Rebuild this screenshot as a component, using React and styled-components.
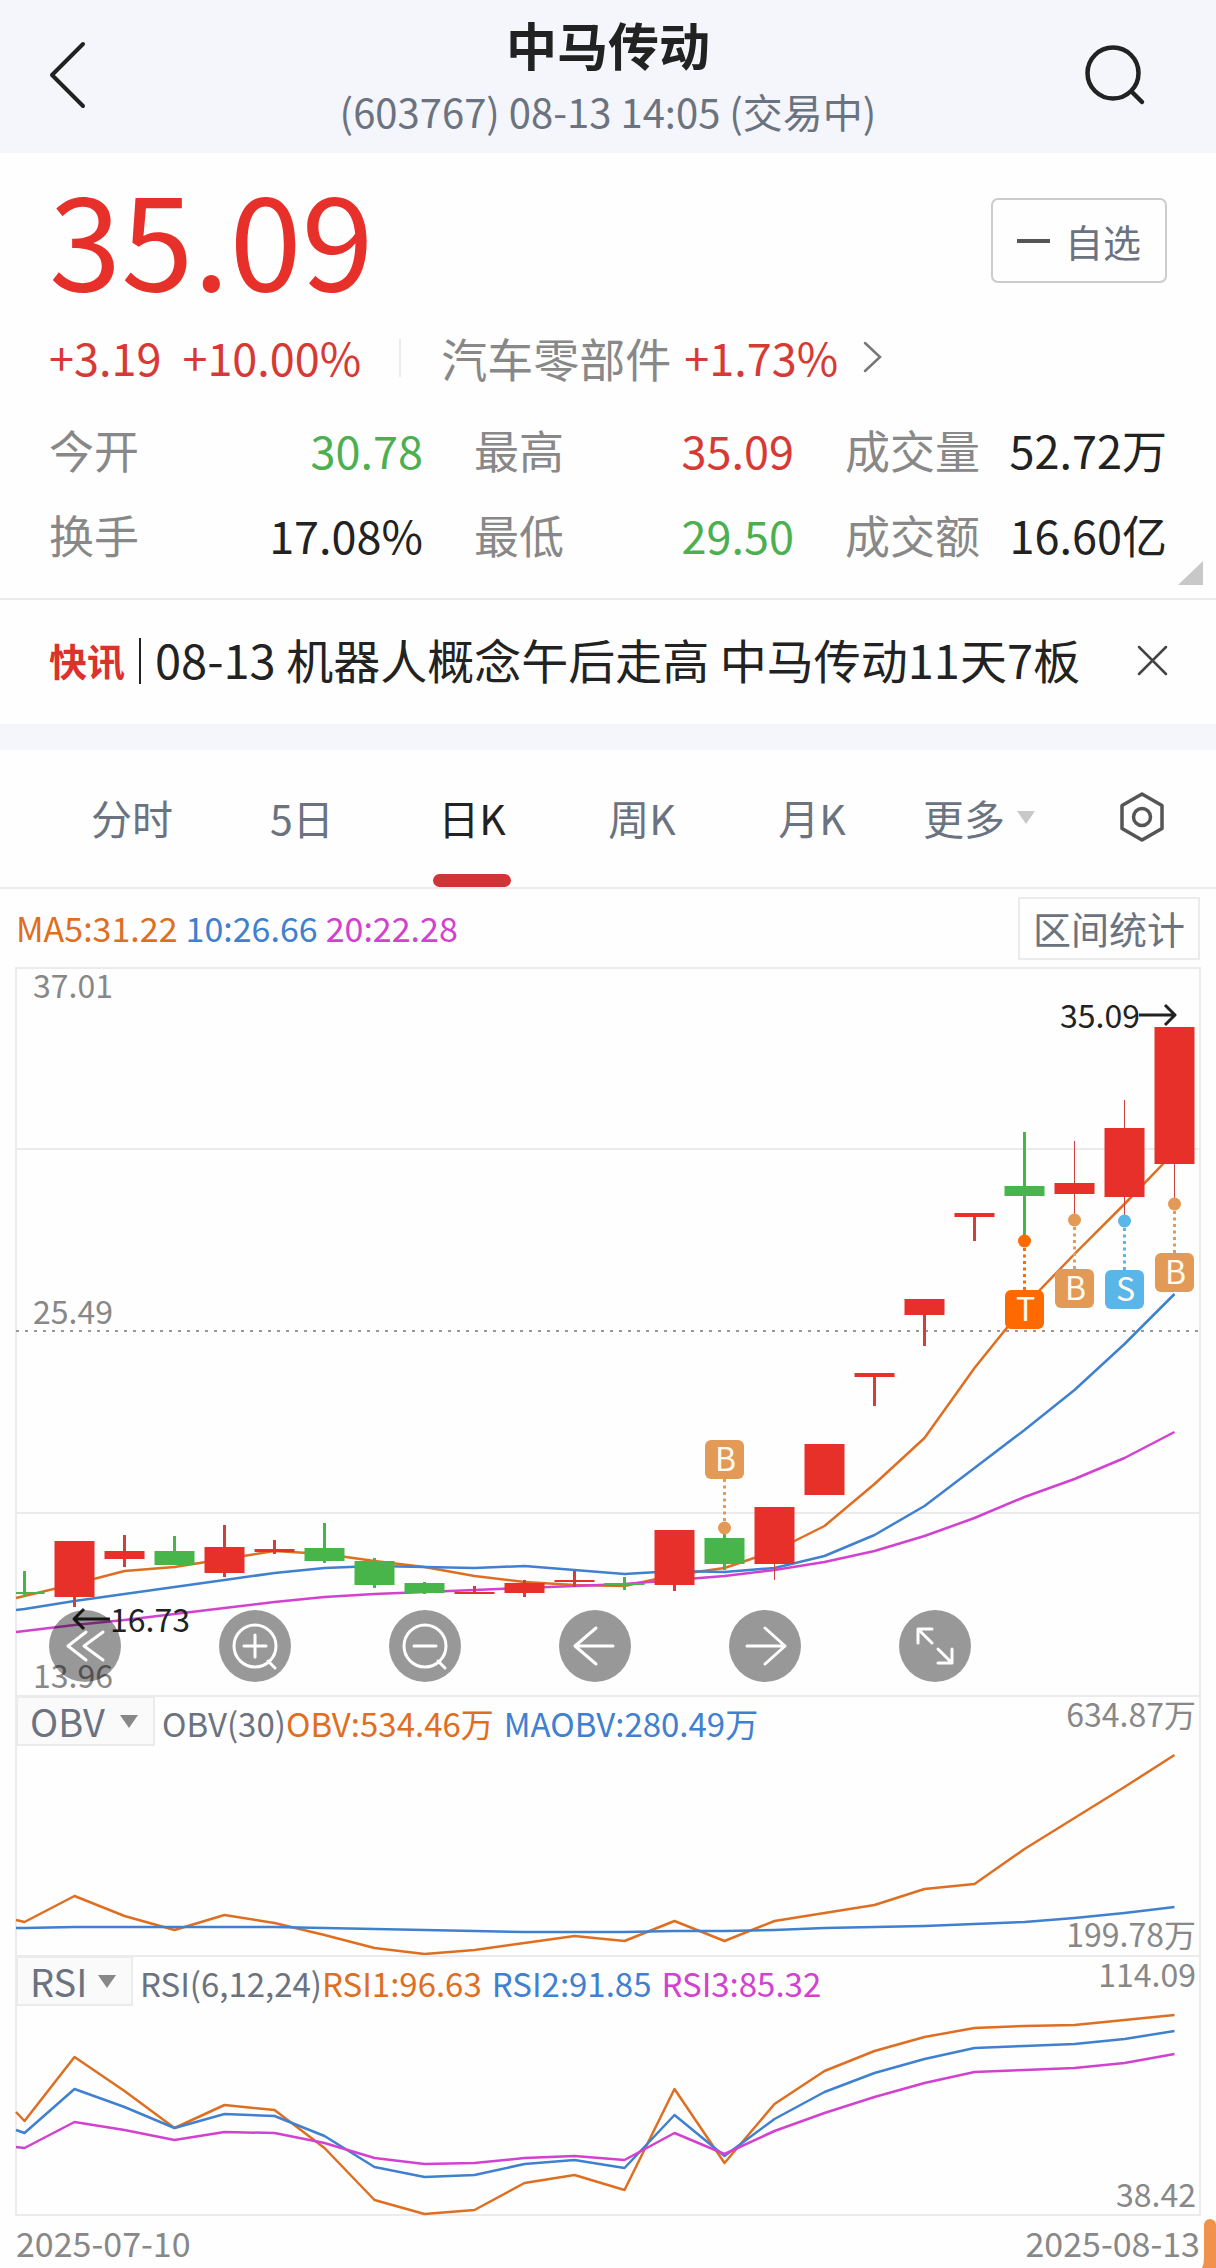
import React from "react";
import styled, { createGlobalStyle, css } from "styled-components";

const color = {
  ink: "#222222",
  muted: "#888888",
  slate: "#6b7280",
  rise: "#d63a35",
  riseFill: "#e7302a",
  fall: "#4caf50",
  fallFill: "#47b549",
  orange: "#de6f22",
  blue: "#3f80cf",
  magenta: "#d241cf",
  line: "#ebebee",
  band: "#f4f6fb",
};

const GlobalStyle = createGlobalStyle`
  *, *::before, *::after { box-sizing: border-box; }
  body {
    margin: 0;
    background: #fefefe;
    color: ${color.ink};
    font-family: "Noto Sans CJK SC", "Noto Sans", sans-serif;
  }
  button, select {
    font: inherit;
    color: inherit;
    background: none;
    border: 0;
    padding: 0;
    margin: 0;
    cursor: pointer;
  }
  a { color: inherit; text-decoration: none; }
  h1, p, dl, dd { margin: 0; }
  svg { display: block; }
`;

const Page = styled.main`
  position: relative;
  overflow: hidden;
`;

/* ---------- header ---------- */

const Header = styled.header`
  display: grid;
  grid-template-columns: 1fr auto 1fr;
  align-items: center;
  padding: 14px 48px 17px;
  background: ${color.band};
`;

const HeaderTitles = styled.div`
  display: flex;
  flex-direction: column;
  align-items: center;
  gap: 12px;
`;

const Title = styled.h1`
  font-size: 51px;
  line-height: 60px;
  font-weight: 700;
`;

const Subtitle = styled.p`
  font-size: 40px;
  line-height: 50px;
  color: ${color.slate};
`;

const IconButton = styled.button`
  display: flex;
  align-items: center;
  justify-content: center;
  flex: none;
  justify-self: ${(p) => (p.$side === "end" ? "end" : "start")};
`;

/* ---------- quote ---------- */

const Quote = styled.section`
  position: relative;
  padding: 20px 49px 33px;
  border-bottom: 2px solid ${color.line};
`;

const PriceRow = styled.div`
  display: flex;
  justify-content: space-between;
  align-items: flex-start;
`;

const Price = styled.p`
  font-size: 130px;
  line-height: 122px;
  height: 144px;
  color: ${color.riseFill};
`;

const WatchButton = styled.button`
  display: flex;
  align-items: center;
  gap: 15px;
  margin-top: 25px;
  padding: 0 24px;
  height: 85px;
  border: 2px solid #cccccc;
  border-radius: 7px;
  font-size: 38px;
  line-height: 48px;
  color: ${color.slate};
`;

const Dash = styled.span`
  width: 33px;
  height: 4px;
  background: #555555;
`;

const ChangeRow = styled.div`
  display: flex;
  align-items: center;
  font-size: 45px;
  line-height: 60px;
  margin-top: 10px;
  color: ${color.rise};
`;

const ChangeValues = styled.div`
  display: flex;
  gap: 21px;
  padding-right: 38px;
`;

const Sector = styled.a`
  display: flex;
  align-items: center;
  gap: 13px;
  padding-left: 42px;
  position: relative;

  &::before {
    content: "";
    position: absolute;
    left: 0;
    top: 12px;
    width: 2px;
    height: 38px;
    background: ${color.line};
  }
  svg { margin-left: 12px; }
`;

const SectorName = styled.span`
  font-size: 46px;
  color: ${color.muted};
`;

const Stats = styled.dl`
  display: grid;
  grid-template-columns: 374fr 320fr 322fr;
  column-gap: 51px;
  row-gap: 25px;
  margin-top: 33px;
  font-size: 45px;
  line-height: 60px;
`;

const Stat = styled.div`
  display: flex;
  justify-content: space-between;
  white-space: nowrap;
`;

const StatLabel = styled.dt`
  color: ${color.muted};
`;

const StatValue = styled.dd`
  color: ${(p) => (p.$trend === "up" ? color.rise : p.$trend === "down" ? color.fall : color.ink)};
`;

const ExpandCorner = styled.button`
  position: absolute;
  right: 13px;
  bottom: 13px;
`;

/* ---------- news ---------- */

const News = styled.section`
  display: flex;
  align-items: center;
  height: 124px;
  padding: 0 48px 3px 49px;
  font-size: 47px;
  line-height: 60px;
  white-space: nowrap;
`;

const NewsTag = styled.strong`
  padding-bottom: 2px;
  font-size: 38px;
  font-weight: 700;
  color: #dd312c;
`;

const NewsLink = styled.a`
  flex: 1;
  display: flex;
  align-items: center;
  margin-left: 14px;
  padding-bottom: 4px;

  &::before {
    content: "";
    width: 2px;
    height: 46px;
    margin-right: 14px;
    margin-top: 4px;
    background: ${color.ink};
  }
`;

const Band = styled.div`
  height: 26px;
  background: ${color.band};
`;

/* ---------- tabs ---------- */

const Tabs = styled.nav`
  display: flex;
  height: 139px;
  padding-left: 47px;
  border-bottom: 2px solid ${color.line};
`;

const Tab = styled.button`
  position: relative;
  flex: 170 1 0;
  display: flex;
  align-items: center;
  justify-content: center;
  gap: 12px;
  padding-bottom: 3px;
  font-size: 41px;
  line-height: 60px;
  white-space: nowrap;
  color: ${(p) => (p.$active ? color.ink : color.slate)};

  ${(p) =>
    p.$active &&
    css`
      &::after {
        content: "";
        position: absolute;
        bottom: 0;
        width: 78px;
        height: 13px;
        border-radius: 7px;
        background: #d13437;
      }
    `}
`;

const MenuTab = styled(Tab)`
  svg { margin-right: 6px; }
`;

const SettingsTab = styled(Tab)`
  flex-grow: 149;
`;

/* ---------- charts ---------- */

const Legend = styled.div`
  display: flex;
  align-items: center;
  gap: ${(p) => (p.$inPanel ? 10 : 8)}px;
  font-size: ${(p) => (p.$inPanel ? 33 : 34)}px;
  line-height: ${(p) => (p.$inPanel ? 54 : 46)}px;
  white-space: nowrap;
`;

const LegendItem = styled.span`
  color: ${(p) => p.$tone};
`;

const ChartBar = styled.div`
  display: flex;
  align-items: center;
  justify-content: space-between;
  height: 78px;
  padding: 0 16px;
`;

const RangeButton = styled.button`
  height: 63px;
  padding: 0 13px;
  border: 2px solid ${color.line};
  font-size: 38px;
  line-height: 56px;
  color: ${color.slate};
`;

const Panel = styled.section`
  display: grid;

  & > * { grid-area: 1 / 1; }
`;

const Plot = styled.svg`
  width: 100%;
  height: auto;
  overflow: visible;

  text {
    font-size: 32px;
    fill: ${color.muted};
  }
`;

const Controls = styled.div`
  align-self: end;
  display: flex;
  padding: 0 196px 13px 0;
`;

const ControlSlot = styled.div`
  flex: 1;
  display: flex;
  justify-content: center;
`;

const ControlButton = styled.button`
  display: flex;
  width: 72px;
  height: 72px;
  border-radius: 50%;
  background: rgba(0, 0, 0, 0.4);

  svg {
    fill: none;
    stroke: #ffffff;
    stroke-width: 3;
    stroke-linecap: round;
    stroke-linejoin: round;
  }
`;

const PanelHead = styled.div`
  align-self: start;
  display: flex;
  align-items: flex-start;
  gap: 7px;
  padding: 1px 16px 0;
`;

const Picker = styled.label`
  display: grid;
  align-items: center;
  width: ${(p) => p.$width}px;
  border: 2px solid ${color.line};
  background: #fafafb;

  & > * { grid-area: 1 / 1; }
  svg { justify-self: end; margin-right: 15px; pointer-events: none; }
`;

const PickerSelect = styled.select`
  appearance: none;
  width: 100%;
  height: 46px;
  padding: 0 36px 0 12px;
  font-size: 38px;
  line-height: 46px;
  color: ${color.slate};
`;

const Dates = styled.div`
  display: flex;
  justify-content: space-between;
  padding: 2px 16px 0;
  font-size: 34px;
  line-height: 50px;
  color: ${color.muted};
`;

const FloatingEdge = styled.svg`
  position: absolute;
  right: 0;
  bottom: 0;
`;

/* ---------- data ---------- */

const STEP = 50;
const FIRST_X = 24.5;
const BODY = 40;
const xAt = (i) => FIRST_X + STEP * i;

/* Each candle: trend, high, body top, body bottom, low, wick width. */
const candles = [
  ["down", 1571, 1592, 1594, 1597, 3],
  ["up", 1541, 1541, 1597, 1607, 3],
  ["up", 1535, 1551, 1559, 1567, 3],
  ["down", 1536, 1551, 1565, 1565, 3],
  ["up", 1525, 1547, 1573, 1577, 3],
  ["up", 1540, 1549, 1552, 1554, 3],
  ["down", 1523, 1548, 1561, 1563, 3],
  ["down", 1558, 1561, 1585, 1588, 3],
  ["down", 1582, 1583, 1593, 1594, 3],
  ["up", 1586, 1592, 1594, 1594, 3],
  ["up", 1580, 1583, 1593, 1597, 3],
  ["up", 1571, 1580, 1582, 1587, 3],
  ["down", 1577, 1583, 1585, 1590, 3],
  ["up", 1530, 1530, 1585, 1591, 3],
  ["down", 1528, 1538, 1564, 1570, 3],
  ["up", 1507, 1507, 1564, 1580, 1],
  ["up", 1444, 1444, 1495, 1495, 1],
  ["up", 1373, 1373, 1377, 1406, 3],
  ["up", 1299, 1299, 1315, 1346, 3],
  ["up", 1213, 1213, 1217, 1241, 3],
  ["down", 1132, 1186, 1196, 1237, 3],
  ["up", 1141, 1183, 1194, 1215, 1],
  ["up", 1100, 1128, 1197, 1215, 1],
  ["up", 1027, 1027, 1164, 1198, 1],
];

/* Each series starts with its value at the left edge of the frame. */
const ma5 = [1598, 1596, 1584, 1571, 1567, 1559, 1551, 1554, 1561, 1567, 1576, 1582, 1585, 1586, 1575, 1568, 1551, 1526, 1484, 1438, 1368, 1306, 1254, 1204, 1152];
const ma10 = [1610, 1609, 1601, 1594, 1587, 1580, 1573, 1568, 1566, 1567, 1568, 1566, 1570, 1574, 1571, 1572, 1568, 1556, 1535, 1506, 1468, 1430, 1390, 1344, 1294];
const ma20 = [1632, 1631, 1625, 1620, 1614, 1608, 1602, 1597, 1594, 1592, 1590, 1588, 1586, 1584, 1580, 1576, 1570, 1562, 1551, 1536, 1518, 1497, 1479, 1458, 1432];

const obv = [1920, 1922, 1896, 1916, 1930, 1915, 1923, 1935, 1948, 1954, 1950, 1943, 1936, 1941, 1921, 1941, 1921, 1913, 1905, 1889, 1884, 1849, 1818, 1787, 1755];
const maObv = [1928, 1928, 1927, 1927, 1927, 1927, 1927, 1928, 1929, 1930, 1931, 1932, 1932, 1932, 1931, 1931, 1930, 1928, 1927, 1926, 1924, 1922, 1918, 1913, 1907];

const rsi1 = [2112, 2121, 2057, 2091, 2128, 2105, 2110, 2148, 2200, 2214, 2210, 2183, 2175, 2190, 2089, 2163, 2104, 2071, 2051, 2037, 2028, 2026, 2025, 2020, 2015];
const rsi2 = [2130, 2133, 2089, 2107, 2128, 2114, 2116, 2136, 2167, 2177, 2175, 2164, 2160, 2168, 2115, 2156, 2119, 2092, 2073, 2059, 2048, 2046, 2044, 2039, 2031];
const rsi3 = [2147, 2148, 2122, 2130, 2140, 2132, 2133, 2143, 2158, 2164, 2163, 2158, 2156, 2160, 2133, 2154, 2131, 2113, 2097, 2083, 2072, 2070, 2068, 2063, 2054];

/* Each marker: candle index, letter, fill, dot position, badge top. */
const markers = [
  [14, "B", "#e29a56", 1528, 1440],
  [20, "T", "#ff6a00", 1241, 1290],
  [21, "B", "#e29a56", 1220, 1269],
  [22, "S", "#5ab5e9", 1221, 1270],
  [23, "B", "#e29a56", 1204, 1253],
];

const stats = [
  ["今开", "30.78", "down"],
  ["最高", "35.09", "up"],
  ["成交量", "52.72万", null],
  ["换手", "17.08%", null],
  ["最低", "29.50", "down"],
  ["成交额", "16.60亿", null],
];

/* ---------- parts ---------- */

const Series = ({ values, stroke }) => (
  <polyline
    points={values.map((y, i) => `${i === 0 ? 16 : xAt(i - 1)},${y}`).join(" ")}
    fill="none"
    stroke={stroke}
    strokeWidth="2.5"
    strokeLinejoin="round"
  />
);

const Candle = ({ index, candle }) => {
  const [trend, high, top, bottom, low, wick] = candle;
  const x = xAt(index);
  const left = Math.max(x - BODY / 2, 16);
  const fill = trend === "up" ? color.riseFill : color.fallFill;
  return (
    <g fill={fill}>
      <rect x={x - wick / 2} y={high} width={wick} height={low - high} fill={trend === "up" ? "#cf403c" : color.fallFill} />
      <rect x={left} y={top} width={x + BODY / 2 - left} height={bottom - top} />
    </g>
  );
};

const Marker = ({ marker }) => {
  const [index, letter, fill, dotY, boxTop] = marker;
  const x = xAt(index);
  const from = boxTop > dotY ? boxTop : boxTop + 39;
  return (
    <g>
      <line x1={x} x2={x} y1={from} y2={dotY} stroke={fill} strokeWidth="3" strokeDasharray="3 3.5" />
      <circle cx={x} cy={dotY} r="6.5" fill={fill} />
      <rect x={x - 19.5} y={boxTop} width="39" height="39" rx="6" fill={fill} />
      <text x={x + 1} y={boxTop + 31} textAnchor="middle" style={{ fill: "#fffaf0" }}>
        {letter}
      </text>
    </g>
  );
};

const Triangle = ({ width, height, fill }) => (
  <svg width={width} height={height} viewBox="0 0 18 13" aria-hidden="true">
    <path d="M0 0H18L9 13Z" fill={fill} />
  </svg>
);

const magnifier = "M36 15a21 21 0 1 0 0 42a21 21 0 1 0 0-42M49 51L56 58";
const controls = [
  ["最早", "M37 22L19 36L37 50M54 22L35 36L54 50"],
  ["放大", `${magnifier}M25 36H47M36 25V47`],
  ["缩小", `${magnifier}M25 36H47`],
  ["左移", "M54 36H16M37 18L16 36L37 54"],
  ["右移", "M18 36H56M36 18L56 36L36 54"],
  ["全屏", "M19 33V19H33M19 19L33 33M39 39L53 53M53 39V53H39"],
];

const IndicatorPicker = ({ name, width }) => (
  <Picker $width={width}>
    <PickerSelect aria-label={name} defaultValue={name}>
      <option>{name}</option>
    </PickerSelect>
    <Triangle width={18} height={13} fill="#888888" />
  </Picker>
);

export default function App() {
  return (
    <Page>
      <GlobalStyle />

      <Header>
        <IconButton aria-label="返回">
          <svg width="38" height="68" viewBox="0 0 38 68" fill="none" stroke={color.ink} strokeWidth="4" strokeLinecap="round" strokeLinejoin="round">
            <path d="M35 3L4 34L35 65" />
          </svg>
        </IconButton>
        <HeaderTitles>
          <Title>中马传动</Title>
          <Subtitle>(603767) 08-13 14:05 (交易中)</Subtitle>
        </HeaderTitles>
        <IconButton aria-label="搜索" $side="end">
          <svg width="84" height="64" viewBox="0 0 84 64" fill="none" stroke={color.ink} strokeWidth="4.5" strokeLinecap="round">
            <circle cx="29" cy="30" r="25.5" />
            <path d="M48 49L58 59" />
          </svg>
        </IconButton>
      </Header>

      <Quote>
        <PriceRow>
          <Price>35.09</Price>
          <WatchButton>
            <Dash />
            自选
          </WatchButton>
        </PriceRow>
        <ChangeRow>
          <ChangeValues>
            <span>+3.19</span>
            <span>+10.00%</span>
          </ChangeValues>
          <Sector href="#sector">
            <SectorName>汽车零部件</SectorName>
            <span>+1.73%</span>
            <svg width="20" height="32" viewBox="0 0 20 32" fill="none" stroke="#777777" strokeWidth="2.5" strokeLinecap="round">
              <path d="M2 2L17 16L2 30" />
            </svg>
          </Sector>
        </ChangeRow>
        <Stats>
          {stats.map(([label, value, trend]) => (
            <Stat key={label}>
              <StatLabel>{label}</StatLabel>
              <StatValue $trend={trend}>{value}</StatValue>
            </Stat>
          ))}
        </Stats>
        <ExpandCorner aria-label="展开">
          <svg width="25" height="24" viewBox="0 0 25 24">
            <path d="M25 0V24H0Z" fill="#c8c8c8" />
          </svg>
        </ExpandCorner>
      </Quote>

      <News>
        <NewsTag>快讯</NewsTag>
        <NewsLink href="#news">08-13 机器人概念午后走高 中马传动11天7板</NewsLink>
        <IconButton aria-label="关闭">
          <svg width="31" height="31" viewBox="0 0 31 31" fill="none" stroke="#444444" strokeWidth="2.5" strokeLinecap="round">
            <path d="M2 2L29 29M29 2L2 29" />
          </svg>
        </IconButton>
      </News>

      <Band />

      <Tabs>
        <Tab>分时</Tab>
        <Tab>5日</Tab>
        <Tab $active>日K</Tab>
        <Tab>周K</Tab>
        <Tab>月K</Tab>
        <MenuTab>
          更多
          <Triangle width={18} height={13} fill="#c8c8c8" />
        </MenuTab>
        <SettingsTab aria-label="设置">
          <svg width="44" height="50" viewBox="0 0 44 50" fill="none" stroke="#555555" strokeWidth="3.5" strokeLinejoin="round">
            <path d="M22 2L42 13.500V36.500L22 48L2 36.500V13.500Z" />
            <circle cx="22" cy="25" r="8.500" />
          </svg>
        </SettingsTab>
      </Tabs>

      <ChartBar>
        <Legend>
          <LegendItem $tone={color.orange}>MA5:31.22</LegendItem>
          <LegendItem $tone={color.blue}>10:26.66</LegendItem>
          <LegendItem $tone={color.magenta}>20:22.28</LegendItem>
        </Legend>
        <RangeButton>区间统计</RangeButton>
      </ChartBar>

      <Panel>
        <Plot viewBox="0 967 1216 728" role="img" aria-label="日K">
          <g fill="none" stroke={color.line} strokeWidth="2">
            <path d="M16 1695V968H1200V1695M16 1149H1200M16 1513H1200" />
            <path d="M16 1331H1200" stroke="#999999" strokeDasharray="3 6" />
          </g>
          <text x="33" y="998">37.01</text>
          <text x="33" y="1324">25.49</text>
          <text x="33" y="1688">13.96</text>
          <Series values={ma5} stroke={color.orange} />
          <Series values={ma10} stroke={color.blue} />
          <Series values={ma20} stroke={color.magenta} />
          {candles.map((candle, i) => (
            <Candle key={i} index={i} candle={candle} />
          ))}
          {markers.map((marker) => (
            <Marker key={marker[0]} marker={marker} />
          ))}
          <g fill="none" stroke={color.ink} strokeWidth="3" strokeLinejoin="round">
            <path d="M1139 1015H1175M1165 1005L1175 1015L1165 1025" />
            <path d="M110 1619H74M84 1609L74 1619L84 1629" />
          </g>
          <text x="1060" y="1028" style={{ fill: color.ink }}>35.09</text>
          <text x="110" y="1632" style={{ fill: color.ink }}>16.73</text>
        </Plot>
        <Controls>
          {controls.map(([label, path]) => (
            <ControlSlot key={label}>
              <ControlButton aria-label={label}>
                <svg width="72" height="72" viewBox="0 0 72 72">
                  <path d={path} />
                </svg>
              </ControlButton>
            </ControlSlot>
          ))}
        </Controls>
      </Panel>

      <Panel>
        <Plot viewBox="0 1695 1216 260" role="img" aria-label="OBV">
          <path d="M16 1955V1696H1200V1955" fill="none" stroke={color.line} strokeWidth="2" />
          <Series values={obv} stroke={color.orange} />
          <Series values={maObv} stroke={color.blue} />
          <text x="1196" y="1727" textAnchor="end">634.87万</text>
          <text x="1196" y="1947" textAnchor="end">199.78万</text>
        </Plot>
        <PanelHead>
          <IndicatorPicker name="OBV" width={139} />
          <Legend $inPanel>
            <span>
              <LegendItem $tone={color.slate}>OBV(30)</LegendItem>
              <LegendItem $tone={color.orange}>OBV:534.46万</LegendItem>
            </span>
            <LegendItem $tone={color.blue}>MAOBV:280.49万</LegendItem>
          </Legend>
        </PanelHead>
      </Panel>

      <Panel>
        <Plot viewBox="0 1955 1216 261" role="img" aria-label="RSI">
          <path d="M16 1956H1200V2215H16Z" fill="none" stroke={color.line} strokeWidth="2" />
          <Series values={rsi1} stroke={color.orange} />
          <Series values={rsi2} stroke={color.blue} />
          <Series values={rsi3} stroke={color.magenta} />
          <text x="1196" y="1987" textAnchor="end">114.09</text>
          <text x="1196" y="2207" textAnchor="end">38.42</text>
        </Plot>
        <PanelHead>
          <IndicatorPicker name="RSI" width={117} />
          <Legend $inPanel>
            <span>
              <LegendItem $tone={color.slate}>RSI(6,12,24)</LegendItem>
              <LegendItem $tone={color.orange}>RSI1:96.63</LegendItem>
            </span>
            <LegendItem $tone={color.blue}>RSI2:91.85</LegendItem>
            <LegendItem $tone={color.magenta}>RSI3:85.32</LegendItem>
          </Legend>
        </PanelHead>
      </Panel>

      <Dates>
        <time dateTime="2025-07-10">2025-07-10</time>
        <time dateTime="2025-08-13">2025-08-13</time>
      </Dates>

      <FloatingEdge width="14" height="50" viewBox="0 0 14 50" aria-hidden="true">
        <path d="M2 7A6 6 0 0 1 14 7V50H0Q2 46 2 40Z" fill="#f0924c" />
      </FloatingEdge>
    </Page>
  );
}
